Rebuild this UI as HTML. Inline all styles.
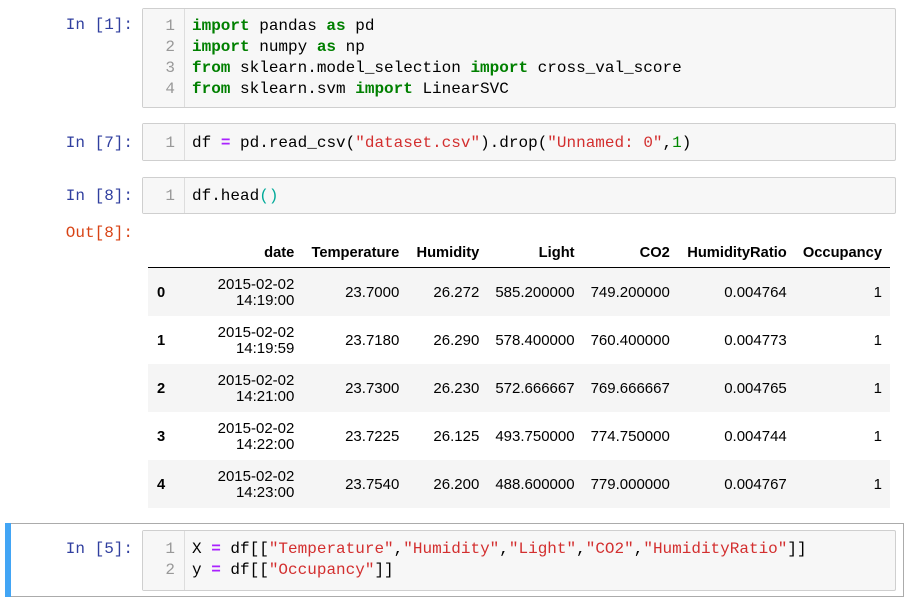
<!DOCTYPE html>
<html><head><meta charset="utf-8"><style>
body{margin:0;width:908px;height:601px;background:#fff;position:relative;overflow:hidden;font-family:"Liberation Sans",Arial,sans-serif}
.p{position:absolute;font-family:"Liberation Mono",monospace;font-size:16px;line-height:21px;color:#303f9f;text-align:right;width:133px;left:0}
.o{color:#d84315}
.box{position:absolute;left:142px;width:752px;background:#f7f7f7;border:1px solid #cfcfcf;border-radius:2px}
.g{position:absolute;left:0;top:0;bottom:0;width:41px;border-right:1px solid #ddd;background:#f7f7f7}
.code{position:absolute;left:0;top:0;font-family:"Liberation Mono",monospace;font-size:16px;line-height:21px;white-space:pre;color:#000}
.ln{display:inline-block;width:32px;text-align:right;color:#999;margin-right:17px}
.k{color:#008000;font-weight:bold}.s{color:#d32f2f}.op{color:#aa22ff;font-weight:bold}.br{color:#0a9}
table{position:absolute;left:148px;top:238px;border-collapse:collapse;font-size:15px;color:#000;width:742px}
th,td{text-align:right;padding:0 8px;}
thead th{height:29px;border-bottom:1px solid #000;vertical-align:middle;font-size:14.7px}
tbody tr{height:48px}
tbody tr:nth-child(odd){background:#f5f5f5}
tbody th{text-align:left;padding-left:9px;font-size:14.7px;padding-top:3px}
td{line-height:16px;padding-top:3px}
</style></head><body>
<div class="p" style="top:15px">In [1]:</div>
<div class="box" style="top:8px;height:98px"><div class="g"></div>
<div class="code" style="top:7px"><span class="ln">1</span><span class="k">import</span> pandas <span class="k">as</span> pd
<span class="ln">2</span><span class="k">import</span> numpy <span class="k">as</span> np
<span class="ln">3</span><span class="k">from</span> sklearn.model_selection <span class="k">import</span> cross_val_score
<span class="ln">4</span><span class="k">from</span> sklearn.svm <span class="k">import</span> LinearSVC</div></div>

<div class="p" style="top:133px">In [7]:</div>
<div class="box" style="top:123px;height:36px"><div class="g"></div>
<div class="code" style="top:9px"><span class="ln">1</span>df <span class="op">=</span> pd.read_csv(<span class="s">"dataset.csv"</span>).drop(<span class="s">"Unnamed: 0"</span>,<span style="color:#080">1</span>)</div></div>

<div class="p" style="top:186px">In [8]:</div>
<div class="box" style="top:177px;height:35px"><div class="g"></div>
<div class="code" style="top:8px"><span class="ln">1</span>df.head<span class="br">()</span></div></div>

<div class="p o" style="top:223px">Out[8]:</div>
<table>
<colgroup><col style="width:61px"><col style="width:94px"><col style="width:105px"><col style="width:80px"><col style="width:95px"><col style="width:95px"><col style="width:117px"><col style="width:95px"></colgroup>
<thead><tr><th></th><th>date</th><th>Temperature</th><th>Humidity</th><th>Light</th><th>CO2</th><th>HumidityRatio</th><th>Occupancy</th></tr></thead>
<tbody>
<tr><th>0</th><td>2015-02-02<br>14:19:00</td><td>23.7000</td><td>26.272</td><td>585.200000</td><td>749.200000</td><td>0.004764</td><td>1</td></tr>
<tr><th>1</th><td>2015-02-02<br>14:19:59</td><td>23.7180</td><td>26.290</td><td>578.400000</td><td>760.400000</td><td>0.004773</td><td>1</td></tr>
<tr><th>2</th><td>2015-02-02<br>14:21:00</td><td>23.7300</td><td>26.230</td><td>572.666667</td><td>769.666667</td><td>0.004765</td><td>1</td></tr>
<tr><th>3</th><td>2015-02-02<br>14:22:00</td><td>23.7225</td><td>26.125</td><td>493.750000</td><td>774.750000</td><td>0.004744</td><td>1</td></tr>
<tr><th>4</th><td>2015-02-02<br>14:23:00</td><td>23.7540</td><td>26.200</td><td>488.600000</td><td>779.000000</td><td>0.004767</td><td>1</td></tr>
</tbody></table>

<div style="position:absolute;left:5px;top:523px;width:898px;height:72px;border:1px solid #ababab;border-left:0"></div>
<div style="position:absolute;left:5px;top:523px;width:6px;height:74px;background:#42a5f5"></div>
<div class="p" style="top:539px">In [5]:</div>
<div class="box" style="top:530px;height:59px"><div class="g"></div>
<div class="code" style="top:8px"><span class="ln">1</span>X <span class="op">=</span> df[[<span class="s">"Temperature"</span>,<span class="s">"Humidity"</span>,<span class="s">"Light"</span>,<span class="s">"CO2"</span>,<span class="s">"HumidityRatio"</span>]]
<span class="ln">2</span>y <span class="op">=</span> df[[<span class="s">"Occupancy"</span>]]</div></div>
</body></html>
